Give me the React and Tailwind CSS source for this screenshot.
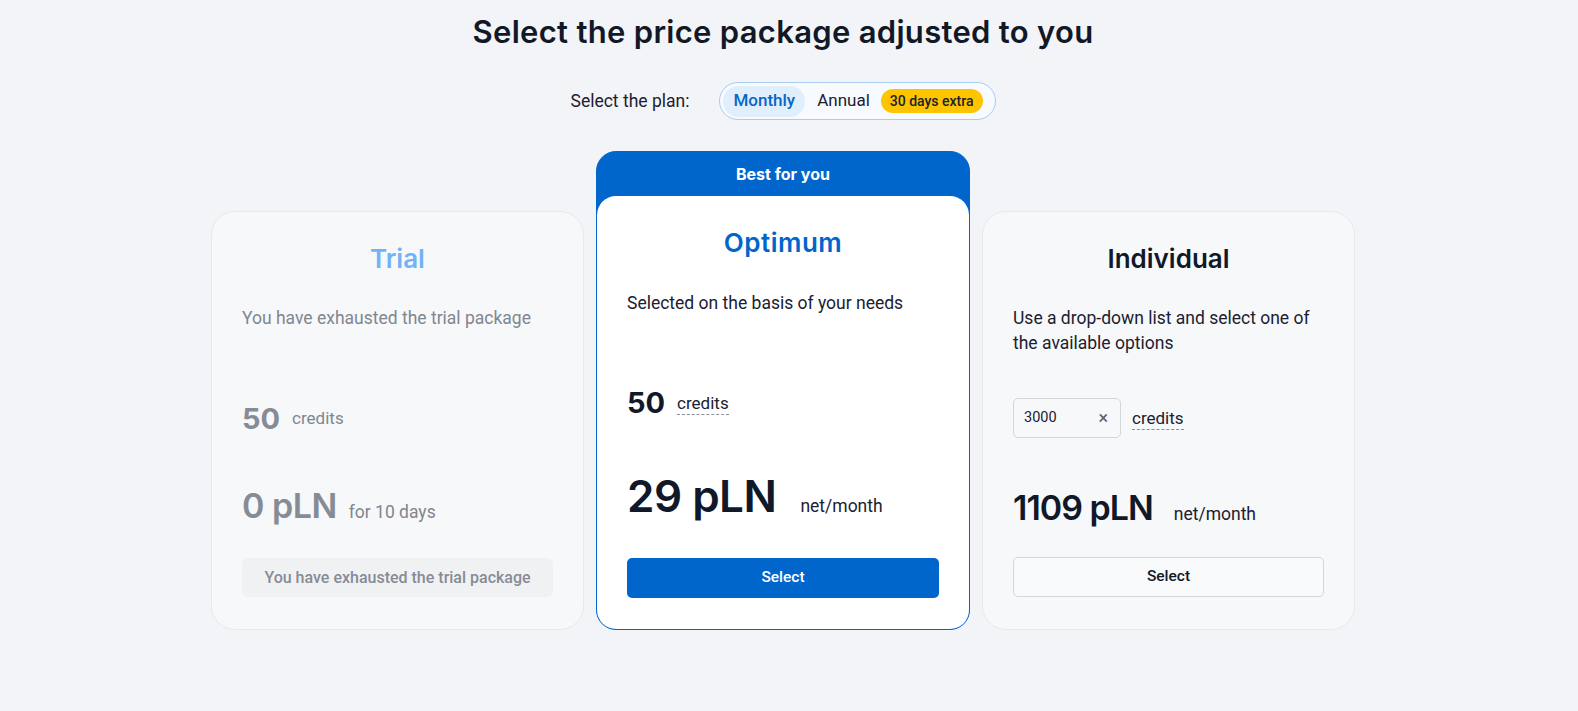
import React from 'react'

const head = { fontFamily: 'Inter, "Noto Sans", sans-serif' }
const body = { fontFamily: 'Roboto, "Liberation Sans", sans-serif' }

function Credits({ dashed, muted }) {
    return (
        <span
            className={`text-[17px] ${muted ? 'text-[#80868f]' : 'text-[#1b2130]'} ${dashed ? 'border-b border-dashed border-[#8a9099] leading-[22px]' : ''}`}
        >
            credits
        </span>
    )
}

function App() {
    return (
        <div className="min-h-screen bg-[#f3f4f7]" style={body}>
            <div className="w-[1566px] flex flex-col items-center pt-[12px]">
                {/* Title */}
                <h1 className="text-[31px] leading-[40px] font-semibold text-[#111827] tracking-[0.3px]" style={head}>
                    Select the price package adjusted to you
                </h1>

                {/* Plan toggle */}
                <div className="flex items-center gap-[30px] mt-[30px]">
                    <span className="text-[17.5px] text-[#1b2130]">Select the plan:</span>
                    <div className="flex items-center h-[38px] px-[3px] pr-[12px] rounded-full border border-[#a9cdf1] bg-[#f7fafe]">
                        <span className="h-[31px] flex items-center px-[10px] rounded-full bg-[#e1eefc] text-[#0a66c8] text-[17px] font-medium">
                            Monthly
                        </span>
                        <span className="ml-[12px] text-[17px] text-[#1b2130]">Annual</span>
                        <span className="ml-[11px] h-[24px] flex items-center px-[9px] rounded-full bg-[#fdc400] text-[14px] font-medium text-[#1b2130]">
                            30 days extra
                        </span>
                    </div>
                </div>

                {/* Cards */}
                <div className="flex items-end gap-[12px] mt-[31px]">
                    {/* Trial */}
                    <div className="w-[373px] h-[419px] rounded-[24px] border border-[#e8e9ed] bg-[#f7f8fa] px-[30px] pt-[31px] flex flex-col">
                        <h2 className="text-center text-[26px] leading-[32px] font-semibold text-[#72b2f6]" style={head}>Trial</h2>
                        <p className="mt-[31px] text-[17.5px] leading-[25px] text-[#80868f] h-[50px]">You have exhausted the trial package</p>
                        <div className="flex items-center gap-[12px] mt-[48px] h-[30px]">
                            <span className="text-[29px] font-bold text-[#868c96]" style={head}>50</span>
                            <Credits muted />
                        </div>
                        <div className="flex items-baseline gap-[12px] mt-[50px]">
                            <span className="text-[34px] leading-[44px] font-semibold tracking-[-0.5px] text-[#868c96]" style={head}>0 pLN</span>
                            <span className="text-[17.5px] text-[#80868f]">for 10 days</span>
                        </div>
                        <div className="mt-[30px] h-[39px] rounded-[6px] bg-[#f0f1f3] flex items-center justify-center text-[16px] font-medium text-[#868c96]">
                            You have exhausted the trial package
                        </div>
                    </div>

                    {/* Optimum */}
                    <div className="w-[374px] h-[479px] rounded-[20px] border border-[#0066cc] bg-[#0066cc] flex flex-col">
                        <div className="h-[44px] flex items-center justify-center text-white text-[16px] font-bold" style={head}>
                            Best for you
                        </div>
                        <div className="flex-1 bg-white rounded-[19px] px-[30px] pt-[31px] flex flex-col">
                            <h2 className="text-center text-[26px] leading-[32px] font-semibold tracking-[0.5px] text-[#0066cc]" style={head}>Optimum</h2>
                            <p className="mt-[32px] text-[17.5px] leading-[25px] text-[#1b2130] h-[50px]">Selected on the basis of your needs</p>
                            <div className="flex items-center gap-[12px] mt-[47px] h-[30px]">
                                <span className="text-[29px] font-bold text-[#111827]" style={head}>50</span>
                                <Credits dashed />
                            </div>
                            <div className="flex items-baseline gap-[24px] mt-[50px]">
                                <span className="text-[44px] leading-[56px] font-semibold tracking-[-0.5px] text-[#111827]" style={head}>29 pLN</span>
                                <span className="text-[17.5px] text-[#1b2130]">net/month</span>
                            </div>
                            <button className="mt-[34px] h-[40px] rounded-[5px] bg-[#0066cc] text-white text-[15.5px] font-medium">
                                Select
                            </button>
                        </div>
                    </div>

                    {/* Individual */}
                    <div className="w-[373px] h-[419px] rounded-[24px] border border-[#e8e9ed] bg-[#f7f8fa] px-[30px] pt-[31px] flex flex-col">
                        <h2 className="text-center text-[26px] leading-[32px] font-semibold text-[#111827]" style={head}>Individual</h2>
                        <p className="mt-[31px] text-[17.5px] leading-[25px] text-[#1b2130] h-[50px] pr-[10px]">Use a drop-down list and select one of the available options</p>
                        <div className="flex items-center gap-[11px] mt-[42px]">
                            <div className="w-[108px] h-[40px] rounded-[5px] border border-[#d3d6db] bg-[#f7f8fa] flex items-center justify-between pl-[10px] pr-[12px]">
                                <span className="text-[14.5px] text-[#1b2130]">3000</span>
                                <span className="text-[18px] text-[#5b6170] leading-none">×</span>
                            </div>
                            <Credits dashed />
                        </div>
                        <div className="flex items-baseline gap-[21px] mt-[48px]">
                            <span className="text-[34px] leading-[44px] font-semibold tracking-[-1px] text-[#111827]" style={head}>1109 pLN</span>
                            <span className="text-[17.5px] text-[#1b2130]">net/month</span>
                        </div>
                        <button className="mt-[27px] h-[40px] rounded-[5px] border border-[#d3d6db] bg-[#f9fafb] text-[15.5px] font-medium text-[#111827]">
                            Select
                        </button>
                    </div>
                </div>
            </div>
        </div>
    )
}

export default App
